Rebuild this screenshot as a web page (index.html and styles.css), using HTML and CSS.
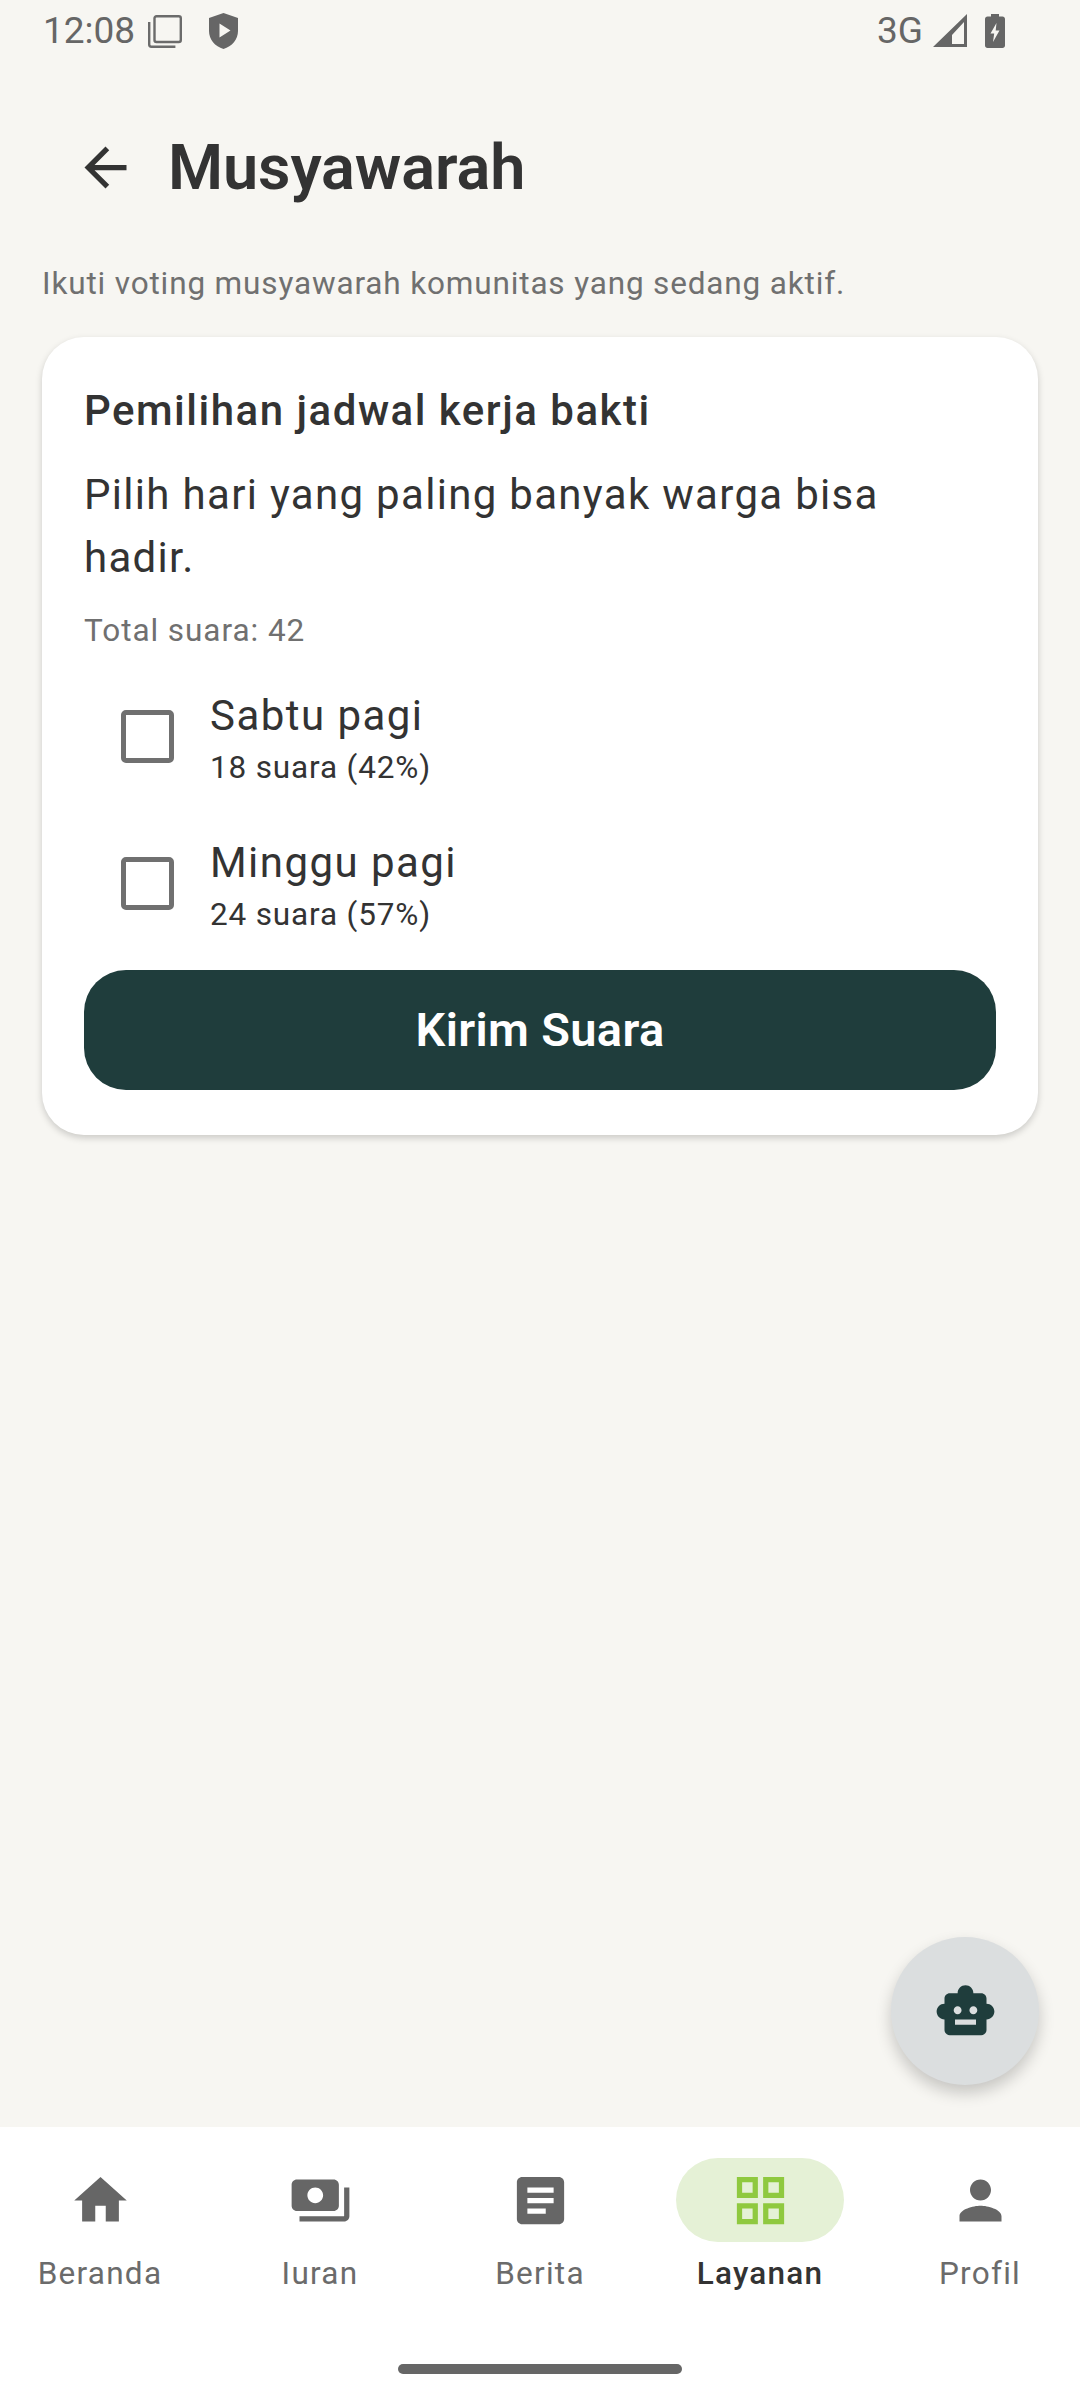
FILE: index.html

```html
<!DOCTYPE html>
<html lang="id">
<head>
    <meta charset="UTF-8">
    <meta name="viewport" content="width=device-width, initial-scale=1.0">
    <title>Musyawarah</title>
    <link rel="stylesheet" href="styles.css">
</head>
<body>
    <div class="statusbar">
        <div class="status-left">
            <span class="clock">12:08</span>
            <svg class="ic-stack" viewBox="0 0 34 33" fill="none" stroke="#6b6b6b" stroke-width="2.4">
                <rect x="6.5" y="1.2" width="26.3" height="25.8" rx="2"/>
                <path d="M1.2 7v22.5c0 1.2.9 2.2 2.2 2.2h24"/>
            </svg>
            <svg class="ic-shield" viewBox="0 0 29 36">
                <path fill="#666" fill-rule="evenodd" d="M14.5 0L29 5v13c0 8.500-6 15.500-14.500 18C6 33.500 0 26.500 0 18V5zM10.500 10.500v14L21.500 17.500z"/>
            </svg>
        </div>
        <div class="status-right">
            <span class="net">3G</span>
            <svg class="ic-signal" viewBox="0 0 34 33">
                <path fill="#666" fill-rule="evenodd" d="M34 0v33H0zM31 8L19 21v9h12z"/>
            </svg>
            <svg class="ic-battery" viewBox="0 0 20 34">
                <path fill="#666" fill-rule="evenodd" d="M6 0h8v2.500h3.500c1.400 0 2.500 1.100 2.500 2.500v26.500c0 1.400-1.100 2.500-2.500 2.500h-15C1.100 34 0 32.900 0 31.500V5c0-1.400 1.100-2.500 2.500-2.500H6zM11.500 9L5.500 19.500h3.700L8 28l6.500-11.500h-3.800z"/>
            </svg>
        </div>
    </div>

    <div class="main">
        <div class="topbar">
            <div class="back">
                <svg class="icon" viewBox="0 0 24 24"><path fill="#333" d="M20 11H7.830l5.590-5.590L12 4l-8 8 8 8 1.410-1.410L7.830 13H20v-2z"/></svg>
            </div>
            <h1>Musyawarah</h1>
        </div>

        <p class="intro">Ikuti voting musyawarah komunitas yang sedang aktif.</p>

        <div class="card">
            <h2>Pemilihan jadwal kerja bakti</h2>
            <p class="desc">Pilih hari yang paling banyak warga bisa hadir.</p>
            <p class="total">Total suara: 42</p>

            <div class="options">
                <div class="option">
                    <div class="check"><span class="box"></span></div>
                    <div class="option-text">
                        <div class="option-name">Sabtu pagi</div>
                        <div class="option-count">18 suara (42%)</div>
                    </div>
                </div>
                <div class="option">
                    <div class="check"><span class="box"></span></div>
                    <div class="option-text">
                        <div class="option-name">Minggu pagi</div>
                        <div class="option-count">24 suara (57%)</div>
                    </div>
                </div>
            </div>

            <button class="submit">Kirim Suara</button>
        </div>

        <div class="fab">
            <svg class="icon" viewBox="0 0 24 24"><path fill="#1f3d3c" d="M20 9V7c0-1.100-.9-2-2-2h-3c0-1.660-1.340-3-3-3S9 3.340 9 5H6c-1.100 0-2 .9-2 2v2c-1.660 0-3 1.340-3 3s1.340 3 3 3v4c0 1.100.9 2 2 2h12c1.100 0 2-.9 2-2v-4c1.660 0 3-1.340 3-3s-1.340-3-3-3zM7.500 11.500c0-.83.67-1.500 1.500-1.500s1.500.67 1.500 1.500S9.830 13 9 13s-1.500-.67-1.500-1.500zM16 17H8v-2h8v2zm-1-4c-.83 0-1.500-.67-1.500-1.500S14.170 10 15 10s1.500.67 1.500 1.500S15.830 13 15 13z"/></svg>
        </div>
    </div>

    <div class="bottomnav">
        <div class="tabs">
            <div class="tab">
                <div class="tab-icon"><svg class="icon" viewBox="0 0 24 24"><path d="M10 20v-6h4v6h5v-8h3L12 3 2 12h3v8z"/></svg></div>
                <span>Beranda</span>
            </div>
            <div class="tab">
                <div class="tab-icon"><svg class="icon" viewBox="0 0 24 24"><path d="M19 14V6c0-1.100-.9-2-2-2H3c-1.100 0-2 .9-2 2v8c0 1.100.9 2 2 2h14c1.100 0 2-.9 2-2zm-9-1c-1.660 0-3-1.340-3-3s1.340-3 3-3 3 1.340 3 3-1.340 3-3 3zm13-6v11c0 1.100-.9 2-2 2H4v-2h17V7h2z"/></svg></div>
                <span>Iuran</span>
            </div>
            <div class="tab">
                <div class="tab-icon"><svg class="icon" viewBox="0 0 24 24"><path d="M19 3H5c-1.100 0-2 .9-2 2v14c0 1.100.9 2 2 2h14c1.100 0 2-.9 2-2V5c0-1.100-.9-2-2-2zm-5 14H7v-2h7v2zm3-4H7v-2h10v2zm0-4H7V7h10v2z"/></svg></div>
                <span>Berita</span>
            </div>
            <div class="tab active">
                <div class="tab-icon"><svg class="icon" viewBox="0 0 24 24"><path d="M3 3v8h8V3H3zm6 6H5V5h4v4zm-6 4v8h8v-8H3zm6 6H5v-4h4v4zm4-16v8h8V3h-8zm6 6h-4V5h4v4zm-6 4v8h8v-8h-8zm6 6h-4v-4h4v4z"/></svg></div>
                <span>Layanan</span>
            </div>
            <div class="tab">
                <div class="tab-icon"><svg class="icon" viewBox="0 0 24 24"><path d="M12 12c2.210 0 4-1.790 4-4s-1.790-4-4-4-4 1.790-4 4 1.790 4 4 4zm0 2c-2.670 0-8 1.340-8 4v2h16v-2c0-2.660-5.330-4-8-4z"/></svg></div>
                <span>Profil</span>
            </div>
        </div>
        <div class="home-indicator"></div>
    </div>
</body>
</html>
```

FILE: styles.css

```css
* {
    box-sizing: border-box;
}
body {
    margin: 0;
    width: 1080px;
    height: 2400px;
    display: flex;
    flex-direction: column;
    font-family: Roboto, "Noto Sans", sans-serif;
    background-color: #f7f6f2;
    color: #333;
}
.icon {
    display: block;
    width: 63px;
    height: 63px;
}

/* status bar */
.statusbar {
    height: 63px;
    padding: 0 75px 0 43px;
    display: flex;
    justify-content: space-between;
    color: #666;
}
.status-left,
.status-right {
    display: flex;
    align-items: flex-start;
}
.clock {
    font-size: 37px;
    line-height: 62px;
}
.ic-stack {
    width: 34px;
    height: 33px;
    margin: 15px 0 0 13px;
}
.ic-shield {
    width: 29px;
    height: 36px;
    margin: 13px 0 0 27px;
}
.net {
    font-size: 37px;
    line-height: 62px;
}
.ic-signal {
    width: 34px;
    height: 33px;
    margin: 14px 0 0 10px;
}
.ic-battery {
    width: 20px;
    height: 34px;
    margin: 14px 0 0 18px;
}

/* header */
.main {
    flex: 1;
    position: relative;
}
.topbar {
    display: flex;
    align-items: center;
    height: 126px;
    margin-top: 41px;
    padding-left: 42px;
}
.back {
    width: 126px;
    height: 126px;
    display: flex;
    align-items: center;
    justify-content: center;
}
h1 {
    margin: 0;
    font-size: 63px;
    font-weight: 600;
    letter-spacing: -0.1px;
}
.intro {
    margin: 33px 42px 0;
    font-size: 31.5px;
    line-height: 42px;
    letter-spacing: 0.85px;
    color: #707070;
}

/* card */
.card {
    margin: 32px 42px 0;
    padding: 42px 42px 45px;
    background-color: white;
    border-radius: 42px;
    box-shadow: 0 3px 7px rgba(0,0,0,0.18);
}
h2 {
    margin: 0;
    font-size: 42px;
    line-height: 63px;
    font-weight: 550;
    letter-spacing: 1.5px;
}
.desc {
    margin: 21px 0 0;
    font-size: 42px;
    line-height: 63px;
    letter-spacing: 1.31px;
}
.total {
    margin: 21px 0 0;
    font-size: 31.5px;
    line-height: 42px;
    letter-spacing: 0.95px;
    color: #707070;
}
.options {
    margin-top: 11px;
}
.option {
    display: flex;
    align-items: center;
    height: 147px;
}
.check {
    width: 126px;
    flex-shrink: 0;
    display: flex;
    justify-content: center;
}
.box {
    width: 53px;
    height: 53px;
    border: 5px solid #707070;
    border-radius: 5px;
}
.option-name {
    font-size: 42px;
    line-height: 63px;
    letter-spacing: 1.45px;
}
.option-count {
    font-size: 31.5px;
    line-height: 42px;
    letter-spacing: 0.84px;
}
.submit {
    display: block;
    width: 100%;
    height: 120px;
    margin-top: 13px;
    padding-bottom: 2px;
    border: none;
    border-radius: 42px;
    background-color: #1f3d3c;
    color: white;
    font-family: inherit;
    font-size: 47px;
    font-weight: 600;
    letter-spacing: 0.35px;
}

/* floating button */
.fab {
    position: absolute;
    right: 41px;
    bottom: 42px;
    width: 148px;
    height: 148px;
    border-radius: 50%;
    background-color: #dbdedf;
    display: flex;
    align-items: center;
    justify-content: center;
    box-shadow: 0 8px 16px rgba(0,0,0,0.2);
}

/* bottom navigation */
.bottomnav {
    height: 273px;
    padding-top: 31px;
    background-color: white;
    position: relative;
}
.tabs {
    display: flex;
    justify-content: space-between;
}
.tab {
    width: 200px;
    display: flex;
    flex-direction: column;
    align-items: center;
    font-size: 31.5px;
    font-weight: 450;
    line-height: 42px;
    letter-spacing: 1.25px;
    color: #6b6b6b;
}
.tab-icon {
    width: 168px;
    height: 84px;
    margin-bottom: 11px;
    border-radius: 42px;
    display: flex;
    align-items: center;
    justify-content: center;
}
.tab-icon path {
    fill: #666;
}
.tab.active {
    color: #333;
    font-weight: 500;
}
.tab.active .tab-icon {
    background-color: #e5f1d6;
}
.tab.active .tab-icon path {
    fill: #8fc93f;
}
.home-indicator {
    position: absolute;
    left: 398px;
    bottom: 26px;
    width: 284px;
    height: 10px;
    border-radius: 5px;
    background-color: #666;
}
```
